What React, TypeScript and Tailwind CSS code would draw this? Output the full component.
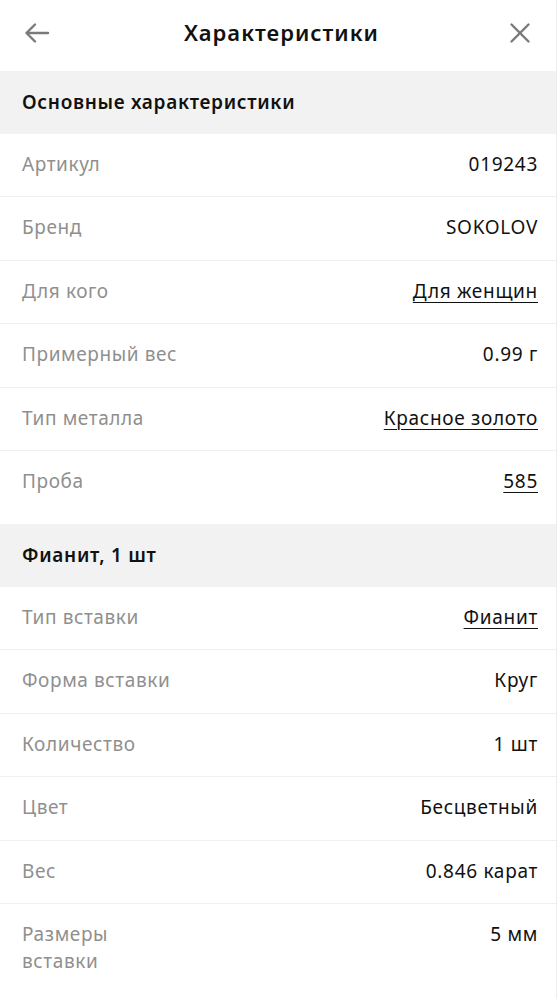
import React from "react";

interface Row {
  label: string;
  value: string;
  link?: boolean;
  wrap?: boolean;
}

interface Section {
  title: string;
  rows: Row[];
}

const sections: Section[] = [
  {
    title: "Основные характеристики",
    rows: [
      { label: "Артикул", value: "019243" },
      { label: "Бренд", value: "SOKOLOV" },
      { label: "Для кого", value: "Для женщин", link: true },
      { label: "Примерный вес", value: "0.99 г" },
      { label: "Тип металла", value: "Красное золото", link: true },
      { label: "Проба", value: "585", link: true },
    ],
  },
  {
    title: "Фианит, 1 шт",
    rows: [
      { label: "Тип вставки", value: "Фианит", link: true },
      { label: "Форма вставки", value: "Круг" },
      { label: "Количество", value: "1 шт" },
      { label: "Цвет", value: "Бесцветный" },
      { label: "Вес", value: "0.846 карат" },
      { label: "Размеры вставки", value: "5 мм", wrap: true },
    ],
  },
];

const font = { fontFamily: '"Noto Sans", "Open Sans", sans-serif' };

const App: React.FC = () => {
  return (
    <div className="w-[557px] min-h-[999px] bg-white border-r border-[#ededed]" style={font}>
      <div className="h-[71px] flex items-center justify-between pl-[24px] pr-[25px] pb-[6px]">
        <svg width="26" height="24" viewBox="0 0 26 24" fill="none" stroke="#7a7a7a" strokeWidth="2.4" strokeLinecap="round" strokeLinejoin="round">
          <path d="M24 12H3" />
          <path d="M11 3.5L2.5 12L11 20.5" />
        </svg>
        <h1 className="text-[22px] font-semibold text-[#111] tracking-[1px] ml-[4px]">Характеристики</h1>
        <svg width="22" height="22" viewBox="0 0 22 22" fill="none" stroke="#7a7a7a" strokeWidth="2.4" strokeLinecap="round">
          <path d="M2.5 2.5L19.5 19.5" />
          <path d="M19.5 2.5L2.5 19.5" />
        </svg>
      </div>
      {sections.map((s, si) => (
        <div key={si}>
          <div className="h-[62.5px] bg-[#f2f2f2] flex items-center px-[22px]">
            <h2 className="text-[19px] font-semibold text-[#111] tracking-[0.7px]">{s.title}</h2>
          </div>
          {s.rows.map((r, i) => {
            const last = i === s.rows.length - 1;
            return (
              <div
                key={i}
                className={
                  "flex justify-between items-start gap-4 pl-[22px] pr-[18px] pt-[17px] text-[19px] leading-[27px] " +
                  (last ? "pb-[29px]" : "pb-[18.5px] border-b border-[#efefef]")
                }
              >
                <span className={"text-[#8f8f8f] tracking-[0.6px] " + (r.wrap ? "max-w-[110px]" : "whitespace-nowrap")}>
                  {r.label}
                </span>
                <span
                  className={
                    "text-[#111] text-right whitespace-nowrap tracking-[0.7px] " +
                    (r.link ? "underline underline-offset-[4px] decoration-[1.3px]" : "")
                  }
                >
                  {r.value}
                </span>
              </div>
            );
          })}
        </div>
      ))}
    </div>
  );
};

export default App;
